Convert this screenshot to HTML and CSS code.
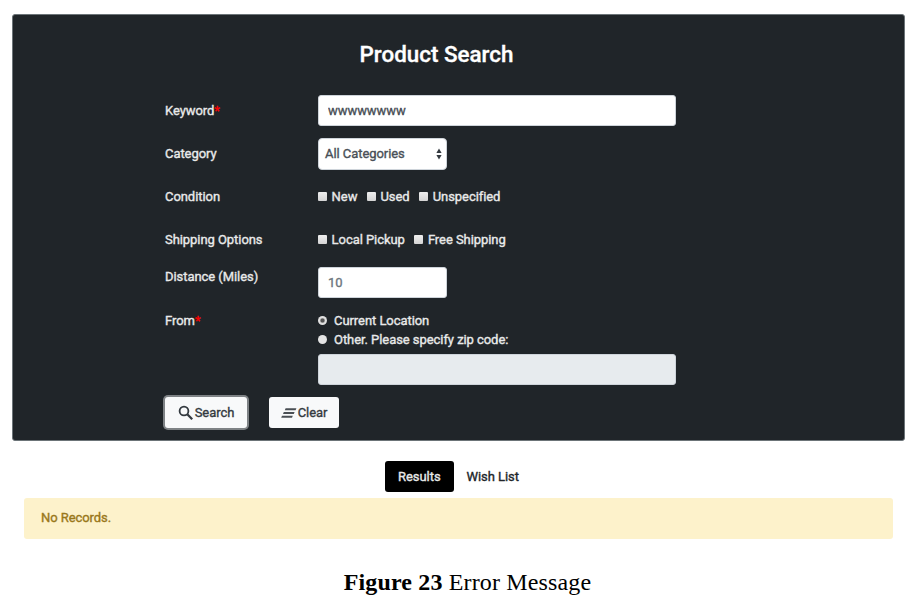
FILE: index.html
```html
<!DOCTYPE html>
<html lang="en">
<head>
<meta charset="utf-8">
<title>Product Search</title>
<link rel="stylesheet" href="styles.css">
</head>
<body>
<section class="card">
  <h1 class="title"><span>Product Search</span></h1>
  <form class="form">
    <div class="row">
      <label class="label" for="keyword">Keyword<span class="req">*</span></label>
      <input class="input" id="keyword" type="text" value="wwwwwwww">
    </div>
    <div class="row">
      <span class="label">Category</span>
      <div class="select"><span>All Categories</span>
        <svg class="arrows" viewBox="0 0 6 12" width="6" height="12"><path d="M3 0.5 5.6 5H.4zM3 11.5 5.6 7H.4z" fill="#343a40"/></svg>
      </div>
    </div>
    <div class="row">
      <span class="label">Condition</span>
      <div class="checks">
        <span class="check"><i class="box"></i>New</span>
        <span class="check"><i class="box"></i>Used</span>
        <span class="check"><i class="box"></i>Unspecified</span>
      </div>
    </div>
    <div class="row">
      <span class="label">Shipping Options</span>
      <div class="checks">
        <span class="check"><i class="box"></i>Local Pickup</span>
        <span class="check"><i class="box"></i>Free Shipping</span>
      </div>
    </div>
    <div class="row row-top">
      <label class="label" for="distance">Distance (Miles)</label>
      <input class="input small" id="distance" type="text" placeholder="10">
    </div>
    <div class="row row-from">
      <span class="label">From<span class="req">*</span></span>
      <div class="from">
        <span class="radio"><i class="dot on"></i>Current Location</span>
        <span class="radio"><i class="dot"></i>Other. Please specify zip code:</span>
        <input class="input zip" type="text" disabled>
      </div>
    </div>
    <div class="buttons">
      <button class="btn focus" type="button">
        <svg viewBox="0 0 16 16" width="16" height="16" fill="none" stroke="#343a40"><circle cx="6" cy="6" r="4.4" stroke-width="1.8"/><path d="M9.3 9.3 14.2 14.2" stroke-width="2.3"/></svg><span>Search</span>
      </button>
      <button class="btn clear" type="button">
        <svg viewBox="0 0 16 12" width="16" height="12" fill="#4a4f54"><path d="M4.6 1.3h10.8l-.8 2H3.8zM2.8 5h10.8l-.8 2H2zM1 8.7h10.8l-.8 2H.2z"/></svg><span>Clear</span>
      </button>
    </div>
  </form>
</section>
<nav class="tabs">
  <a class="tab active">Results</a>
  <a class="tab">Wish List</a>
</nav>
<div class="alert">No Records.</div>
<p class="caption"><b>Figure 23</b> Error Message</p>
</body>
</html>
```
FILE: styles.css
```css
* { box-sizing: border-box; }
body {
  margin: 0;
  padding: 14px 14px 0 12px;
  background: #fff;
  color: #212529;
  font: 400 13px/19px Roboto, "Liberation Sans", sans-serif;
  letter-spacing: -0.06px;
  -webkit-text-stroke: 0.35px;
}
.card {
  height: 427px;
  padding-top: 25px;
  border: 1px solid #6c7478;
  border-radius: 3px;
  background: #202529;
  color: #e9eaea;
}
.title {
  margin: 0 0 20px;
  padding-right: 44px;
  font-size: 22.4px;
  line-height: 29px;
  font-weight: 500;
  letter-spacing: 0;
  text-align: center;
  color: #fff;
}
.form { margin-left: 152px; width: 511px; }
.row {
  display: grid;
  grid-template-columns: 153px 1fr;
  align-items: center;
  height: 43px;
}
.row-top { align-items: start; padding-top: 6px; }
.row-from { align-items: start; height: 86px; padding-top: 7px; }
.req { color: #f00; }
.input {
  width: 358px;
  height: 31px;
  padding: 0 9px;
  border: 1px solid #ced4da;
  border-radius: 3px;
  background: #fff;
  color: #495057;
  font: inherit;
  letter-spacing: inherit;
  -webkit-text-stroke: inherit;
}
.small { width: 129px; }
.input::placeholder { color: #6c757d; opacity: 1; }
.zip { margin-top: 6px; background: #e7ebee; }
.select {
  display: flex;
  align-items: center;
  justify-content: space-between;
  width: 129px;
  height: 32px;
  padding: 0 4px 0 6px;
  border: 1px solid #ced4da;
  border-radius: 4px;
  background: #fff;
  color: #495057;
}
.checks { display: flex; gap: 9.5px; }
.check, .radio { display: flex; align-items: center; white-space: nowrap; }
.box { width: 9px; height: 9px; margin-right: 4.6px; background: linear-gradient(#eee, #d4d4d4); border-radius: 1px; }
.from { display: flex; flex-direction: column; align-items: flex-start; }
.radio { height: 19px; }
.radio + .radio { height: 18px; }
.dot { width: 9px; height: 9px; margin-right: 7px; border-radius: 50%; background: #e4e4e4; }
.dot.on { background: radial-gradient(circle, #555 0 1.5px, #aaa 2.3px, #e0e0e0 3px); }
.buttons { display: flex; gap: 22px; padding-top: 7px; }
.btn {
  display: flex;
  align-items: center;
  justify-content: center;
  width: 82px;
  height: 31px;
  padding: 0;
  border: 0;
  border-radius: 3px;
  background: #f8f9fa;
  color: #343a40;
  font: inherit;
  letter-spacing: inherit;
  -webkit-text-stroke: inherit;
}
.btn svg { margin-right: 1px; }
.clear { width: 70px; }
.focus { box-shadow: 0 0 0 2px #7e8285; }
.tabs { display: flex; justify-content: center; margin: 19px 0 6px; padding-top: 1px; }
.tab { height: 31px; padding: 0 13px; line-height: 31px; border-radius: 3px; }
.active { background: #000; color: #e9eaea; }
.alert {
  height: 41px;
  margin: 0 12px;
  padding: 0 17px;
  border-radius: 3px;
  background: #fdf2cb;
  color: #99771a;
  line-height: 40px;
}
.caption {
  margin: 29px 0 0;
  padding-left: 18px;
  color: #000;
  font: 400 24px/28px "Liberation Serif", "Times New Roman", serif;
  letter-spacing: 0.15px;
  text-align: center;
  -webkit-text-stroke: 0;
}
```
